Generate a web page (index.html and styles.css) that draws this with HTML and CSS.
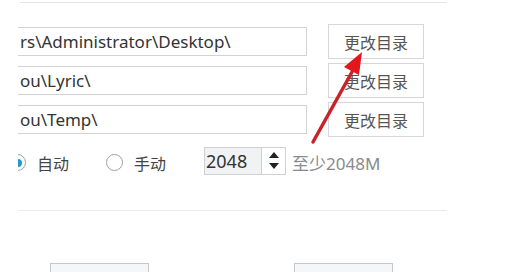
FILE: index.html
```html
<!DOCTYPE html>
<html lang="zh-CN">
<head>
    <meta charset="UTF-8">
    <title>下载设置</title>
    <link rel="stylesheet" href="styles.css">
</head>
<body>
    <div class="panel">
        <div class="top-rule"></div>

        <div class="dirs">
            <div class="dir-row">
                <div class="path">rs\Administrator\Desktop\</div>
                <button class="change-btn">更改目录</button>
            </div>
            <div class="dir-row">
                <div class="path">ou\Lyric\</div>
                <button class="change-btn">更改目录</button>
            </div>
            <div class="dir-row">
                <div class="path">ou\Temp\</div>
                <button class="change-btn">更改目录</button>
            </div>
        </div>

        <div class="cache-row">
            <span class="radio checked first"></span>
            <span class="radio-label">自动</span>
            <span class="radio"></span>
            <span class="radio-label">手动</span>
            <div class="spinner">
                <div class="spin-value">2048</div>
                <div class="spin-arrows">
                    <span class="arrow-up"></span>
                    <span class="arrow-down"></span>
                </div>
            </div>
            <span class="hint">至少2048M</span>
        </div>

        <div class="rule"></div>

        <div class="footer">
            <button class="foot-btn"></button>
            <button class="foot-btn"></button>
        </div>
    </div>

    <svg class="pointer" width="507" height="272" viewBox="0 0 507 272">
        <line x1="313" y1="142" x2="352" y2="72" stroke="#c9232a" stroke-width="3.5" stroke-linecap="round"/>
        <polygon points="362,52 344,67 359,75" fill="#e3161d"/>
    </svg>
</body>
</html>
```

FILE: styles.css
```css
body {
    margin: 0;
    background-color: #fff;
    font-family: "Noto Sans", "Noto Sans CJK SC", sans-serif;
    color: #333;
    overflow: hidden;
    height: 272px;
}
.panel {
    margin-left: 18px;
    width: 429px;
    height: 272px;
    padding-top: 2px;
    box-sizing: border-box;
    overflow: hidden;
}
.top-rule {
    border-top: 1px solid #e6e6e6;
    margin-left: 2px;
}
.dirs {
    margin-top: 21px;
    display: flex;
    flex-direction: column;
    gap: 4px;
}
.dir-row {
    display: flex;
    align-items: center;
    height: 35px;
}
.path {
    box-sizing: border-box;
    width: 309px;
    height: 29px;
    margin-left: -20px;
    padding-left: 21px;
    border: 1px solid #d2d2d2;
    font-size: 17px;
    line-height: 27px;
    color: #333;
    white-space: nowrap;
}
.change-btn {
    box-sizing: border-box;
    margin-left: 21px;
    width: 96px;
    height: 35px;
    border: 1px solid #d6d6d6;
    background-color: #fff;
    font-family: "Noto Sans CJK SC", sans-serif;
    font-size: 16px;
    color: #555;
    padding: 0;
}
.cache-row {
    display: flex;
    align-items: center;
    height: 29px;
    margin-top: 9px;
}
.radio {
    box-sizing: border-box;
    width: 17px;
    height: 17px;
    border: 1.5px solid #a0a0a0;
    border-radius: 50%;
    display: flex;
    align-items: center;
    justify-content: center;
    margin-left: 37px;
    margin-top: 4px;
}
.radio.first {
    margin-left: -9px;
}
.radio.checked::after {
    content: "";
    width: 8px;
    height: 8px;
    border-radius: 50%;
    background-color: #1f9bcf;
}
.radio-label {
    margin-left: 11px;
    font-family: "Noto Sans CJK SC", sans-serif;
    font-size: 16px;
    color: #444;
    margin-top: 4px;
}
.spinner {
    display: flex;
    margin-left: 38px;
    height: 28px;
}
.spin-value {
    box-sizing: border-box;
    width: 57px;
    border: 1px solid #d0d0d0;
    border-right: none;
    background-color: #f1f2f4;
    font-size: 18px;
    line-height: 26px;
    padding-left: 1px;
    color: #333;
}
.spin-arrows {
    box-sizing: border-box;
    width: 25px;
    border: 1px solid #d0d0d0;
    display: flex;
    flex-direction: column;
    align-items: center;
    justify-content: center;
    gap: 5px;
    background-color: #fff;
}
.arrow-up {
    border-left: 5px solid transparent;
    border-right: 5px solid transparent;
    border-bottom: 6px solid #222;
}
.arrow-down {
    border-left: 5px solid transparent;
    border-right: 5px solid transparent;
    border-top: 6px solid #222;
}
.hint {
    margin-left: 6px;
    margin-top: 4px;
    font-size: 17px;
    color: #8a8a8a;
}
.rule {
    margin-top: 35px;
    border-top: 1px solid #ebebeb;
}
.footer {
    display: flex;
    gap: 145px;
    margin-top: 52px;
    padding-left: 32px;
}
.foot-btn {
    width: 99px;
    height: 30px;
    border: 1px solid #c8c8c8;
    background-color: #f5f6f8;
}
.pointer {
    position: absolute;
    top: 0;
    left: 0;
}
```
